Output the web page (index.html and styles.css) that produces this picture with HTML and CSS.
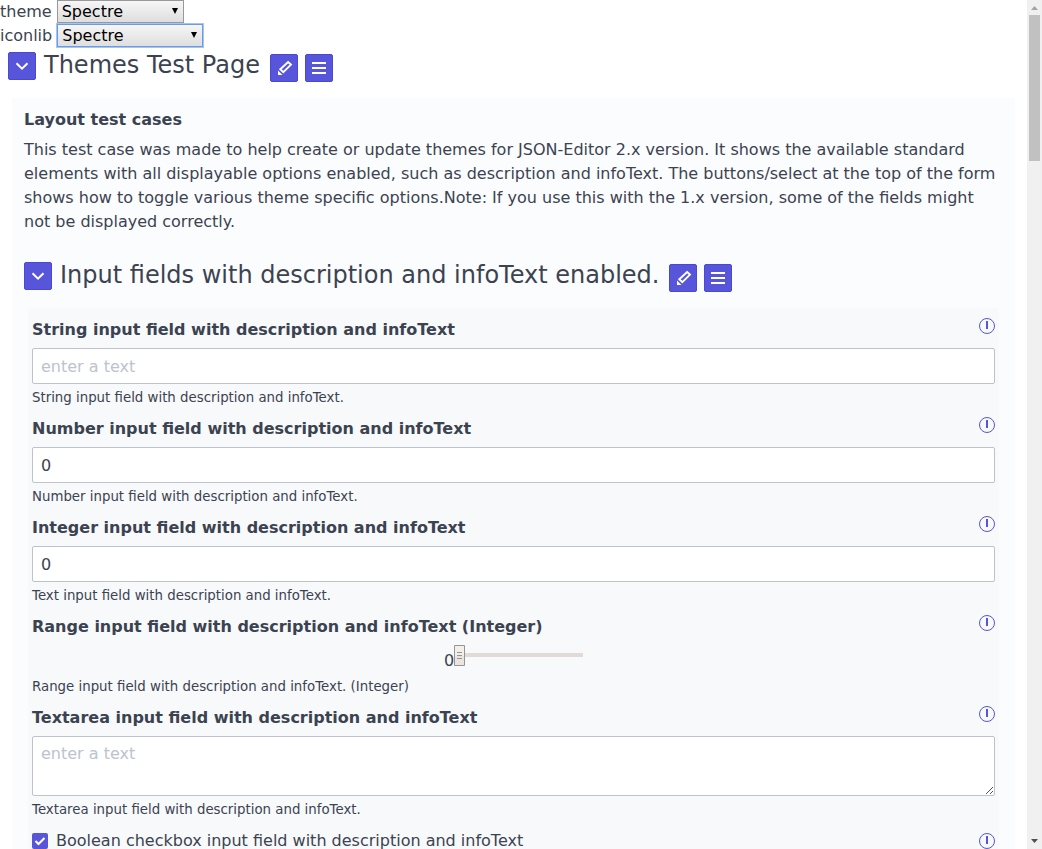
FILE: index.html
```
<!DOCTYPE html>
<html lang="en">
<head>
<meta charset="utf-8">
<title>Themes Test Page</title>
<link rel="stylesheet" href="styles.css">
</head>
<body>
<svg class="defs" width="0" height="0">
  <symbol id="chevron" viewBox="0 0 28 28"><path d="M8.5 11.2L14 16.7L19.5 11.2" fill="none" stroke="#fff" stroke-width="2"/></symbol>
  <symbol id="pencil" viewBox="0 0 28 28"><path d="M10.3 15.2L18.1 8L21 10.6L13.3 18.2Z" fill="none" stroke="#fff" stroke-width="1.9"/><path d="M8 21V16.5L12.5 21Z" fill="#fff"/></symbol>
  <symbol id="menu" viewBox="0 0 28 28"><path d="M7 8h14v2H7zM7 13h14v2H7zM7 18h14v2H7z" fill="#fff"/></symbol>
</svg>
<div class="window">
  <main class="page">
    <div class="option"><span>theme</span><div class="select"><span>Spectre</span><i class="arrow"></i></div></div>
    <div class="option"><span>iconlib</span><div class="select wide focused"><span>Spectre</span><i class="arrow"></i></div></div>
    <header class="heading root">
      <span class="btn collapse"><svg><use href="#chevron"/></svg></span>
      <h3>Themes Test Page</h3>
      <span class="btn"><svg><use href="#pencil"/></svg></span>
      <span class="btn"><svg><use href="#menu"/></svg></span>
    </header>
    <section class="panel">
      <b class="intro-title">Layout test cases</b>
      <p class="intro">This test case was made to help create or update themes for JSON-Editor 2.x version. It shows the available standard<br>elements with all displayable options enabled, such as description and infoText. The buttons/select at the top of the form<br>shows how to toggle various theme specific options.Note: If you use this with the 1.x version, some of the fields might<br>not be displayed correctly.</p>
      <header class="heading">
        <span class="btn collapse"><svg><use href="#chevron"/></svg></span>
        <h3>Input fields with description and infoText enabled.</h3>
        <span class="btn"><svg><use href="#pencil"/></svg></span>
        <span class="btn"><svg><use href="#menu"/></svg></span>
      </header>
      <section class="fields">
        <div class="field">
          <div class="label"><b>String input field with description and infoText</b><i class="info"></i></div>
          <div class="input placeholder">enter a text</div>
          <p class="hint">String input field with description and infoText.</p>
        </div>
        <div class="field">
          <div class="label"><b>Number input field with description and infoText</b><i class="info"></i></div>
          <div class="input">0</div>
          <p class="hint">Number input field with description and infoText.</p>
        </div>
        <div class="field">
          <div class="label"><b>Integer input field with description and infoText</b><i class="info"></i></div>
          <div class="input">0</div>
          <p class="hint">Text input field with description and infoText.</p>
        </div>
        <div class="field">
          <div class="label"><b>Range input field with description and infoText (Integer)</b><i class="info"></i></div>
          <div class="range"><span>0</span><svg width="129" height="21"><path d="M0 8h129v4H0z" fill="#e0dcd5"/><path d="M.5.5h10v20H.5z" fill="#f2efec" stroke="#99948e"/><path d="M1 11h9v9H1z" fill="#ebe4e0"/><path d="M3 7.5h5M3 10.5h5M3 13.5h5" stroke="#99948e"/></svg></div>
          <p class="hint">Range input field with description and infoText. (Integer)</p>
        </div>
        <div class="field">
          <div class="label"><b>Textarea input field with description and infoText</b><i class="info"></i></div>
          <div class="input area placeholder">enter a text<svg class="grip" width="9" height="9"><path d="M1 8L8 1M5 8L8 5" stroke="#555"/></svg></div>
          <p class="hint">Textarea input field with description and infoText.</p>
        </div>
        <div class="field">
          <div class="label boolean"><span class="check"><svg class="box" width="16" height="16"><rect width="16" height="16" rx="2" fill="#5755d9"/><path d="M3.5 8L6.5 11L12.5 5" fill="none" stroke="#fff" stroke-width="2"/></svg>Boolean checkbox input field with description and infoText</span><i class="info"></i></div>
        </div>
      </section>
    </section>
  </main>
  <aside class="scrollbar"><svg width="15" height="15"><path d="M4 10L7.5 6L11 10Z" fill="#a3a3a3"/></svg><div class="thumb"></div><svg width="15" height="15"><path d="M4 5L7.5 9L11 5Z" fill="#505050"/></svg></aside>
</div>
</body>
</html>
```
FILE: styles.css
```
* { box-sizing: border-box; }
body { margin: 0; background: #fff; color: #3b4351; font: 16px/24px "DejaVu Sans", sans-serif; overflow: hidden; }
.defs { display: block; height: 0; }
p, h3 { margin: 0; }
.window { display: flex; height: 849px; overflow: hidden; }
.page { width: 1027px; flex: none; }
.option { display: flex; height: 24px; gap: 5px; white-space: nowrap; }
.select { display: flex; align-items: center; justify-content: space-between; width: 127px; height: 23px; padding: 0 5px 0 4px; border: 1px solid #999; background: linear-gradient(#f6f6f6, #dedede); color: #000; line-height: 21px; }
.select.wide { width: 146px; }
.select.focused { border-color: #6b9be8; box-shadow: 0 0 0 1px #a5c5f6; }
.arrow { border: solid transparent; border-width: 6px 3px 0; border-top-color: #000; margin-bottom: 1px; }
.heading { display: flex; padding-left: 8px; }
.heading h3 { margin: 3px 10px 0 8px; font-weight: 400; font-size: 24px; line-height: 29px; white-space: nowrap; }
.panel .heading { padding: 0; margin-top: 24px; height: 50px; }
.btn { display: flex; width: 28px; height: 28px; margin: 6px 7px 0 0; border: 1px solid #4b48d6; border-radius: 2px; background: #5755d9; }
.btn.collapse { margin: 4px 0 0; }
.btn svg { width: 28px; height: 28px; margin: -1px; flex: none; }
.root { height: 50px; }
.panel { margin: 0 12px; width: 1003px; height: 800px; padding: 10px 16px 0 12px; background: #fbfcfe; }
.intro-title { display: block; margin-bottom: 6px; }
.intro { white-space: nowrap; }
.fields { margin: 0 0 0 4px; width: 971px; height: 600px; padding: 10px 4px 0; background: #f8f9fb; }
.field { white-space: nowrap; }
.label { display: flex; justify-content: space-between; height: 24px; }
.info { display: flex; justify-content: center; width: 16px; height: 16px; padding-top: 2px; border: 1px solid #5755d9; border-radius: 50%; }
.info::before { content: ""; width: 2px; height: 8px; background: #5755d9; }
.input { margin-top: 6px; height: 36px; padding: 6px 8px 5px; border: 1px solid #bcc3ce; border-radius: 2px; background: #fff; line-height: 24px; }
.placeholder { color: #bcc3ce; }
.area { height: 60px; padding-top: 5px; display: flex; justify-content: space-between; }
.grip { align-self: flex-end; margin: 0 -8px -5px 0; }
.hint { height: 33px; padding-top: 5px; font-size: 13.33px; line-height: 18px; }
.range { display: flex; justify-content: center; height: 34px; padding-top: 6px; }
.range span { padding-top: 4px; }
.check { display: flex; gap: 8px; }
.box { margin-top: 4px; }
.boolean .info { margin-top: 4px; }
.scrollbar { display: flex; flex-direction: column; width: 15px; height: 849px; background: #f0f0f0; }
.scrollbar svg { display: block; }
.thumb { width: 11px; height: 146px; margin: 0 2px auto; background: #c1c1c1; }
```
